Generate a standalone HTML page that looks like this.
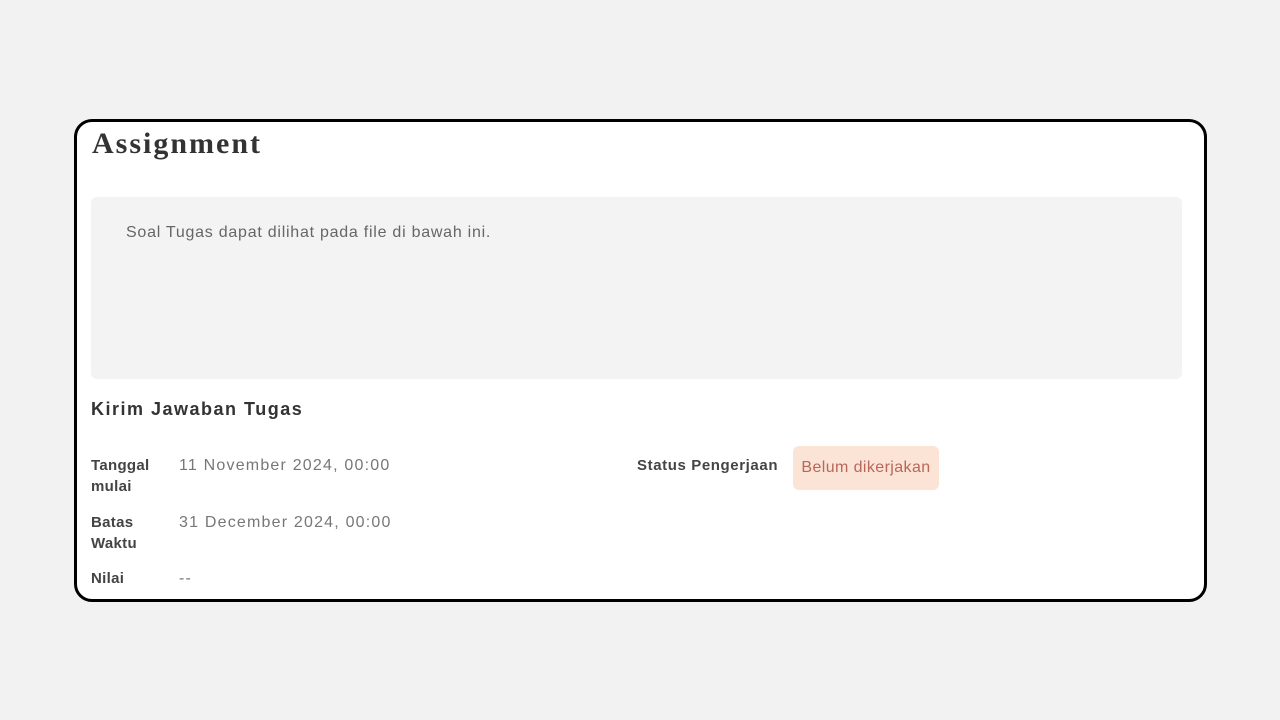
<!DOCTYPE html>
<html><head><meta charset="utf-8"><style>
body{margin:0;width:1280px;height:720px;background:#f2f2f2;font-family:"Liberation Sans",sans-serif;position:relative;overflow:hidden}
.card{position:absolute;left:74px;top:119px;width:1127px;height:477px;border:3px solid #000;border-radius:18px;background:#fff;overflow:hidden}
.a{position:absolute;white-space:nowrap}
h1{position:absolute;left:15px;top:5px;margin:0;font-family:"Liberation Serif",serif;font-weight:bold;font-size:30px;color:#333;letter-spacing:2px}
.box{position:absolute;left:14px;top:75px;width:1091px;height:182px;background:#f3f3f3;border-radius:6px}
.lbl{font-weight:bold;font-size:15px;color:#444;line-height:21px;letter-spacing:0.3px}
.val{font-size:16px;color:#777;letter-spacing:1.2px}
.badge{position:absolute;left:716px;top:324px;width:146px;height:44px;background:#fbe3d6;border-radius:6px;color:#b8675a;font-size:16px;line-height:44px;text-align:center;letter-spacing:0.4px}
</style></head><body>
<div class="card">
<h1>Assignment</h1>
<div class="box"><div class="a" style="left:35px;top:27px;font-size:16px;color:#666;letter-spacing:0.75px">Soal Tugas dapat dilihat pada file di bawah ini.</div></div>
<div class="a" style="left:14px;top:277px;font-size:18px;font-weight:bold;color:#333;letter-spacing:1.5px">Kirim Jawaban Tugas</div>
<div class="a lbl" style="left:14px;top:333px">Tanggal<br>mulai</div>
<div class="a val" style="left:102px;top:335px">11 November 2024, 00:00</div>
<div class="a lbl" style="left:14px;top:390px">Batas<br>Waktu</div>
<div class="a val" style="left:102px;top:392px">31 December 2024, 00:00</div>
<div class="a lbl" style="left:14px;top:446px">Nilai</div>
<div class="a val" style="left:102px;top:448px">--</div>
<div class="a lbl" style="left:560px;top:333px;letter-spacing:0.6px">Status Pengerjaan</div>
<div class="badge">Belum dikerjakan</div>
</div>
</body></html>
